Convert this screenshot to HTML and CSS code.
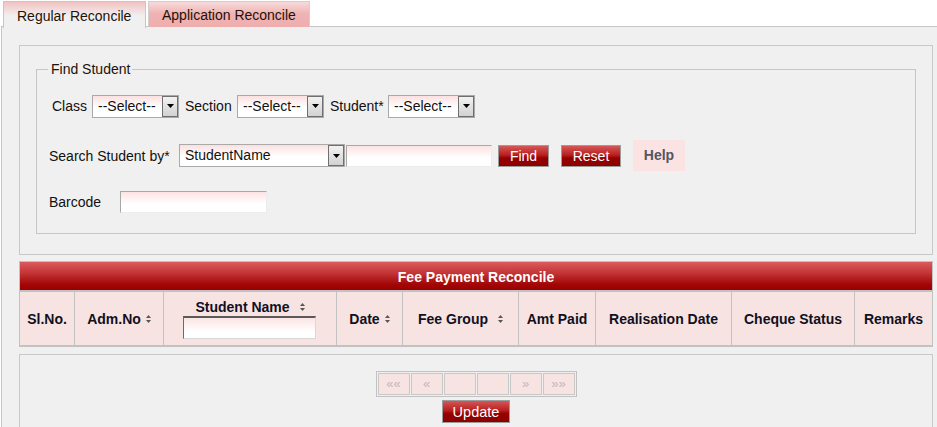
FILE: index.html
```html
<!DOCTYPE html>
<html>
<head>
<meta charset="utf-8">
<title>Fee Payment Reconcile</title>
<link rel="stylesheet" href="styles.css">
</head>
<body>
<div class="tabs">
  <div class="tab tab-active">Regular Reconcile</div>
  <div class="tab">Application Reconcile</div>
</div>
<div class="panel">
  <div class="box">
    <fieldset class="find">
      <legend>Find Student</legend>
      <div class="row row1">
        <span class="lbl lbl-class">Class</span>
        <div class="sel sel-sm"><span class="sel-text">--Select--</span><span class="sel-btn"><svg width="7" height="4" viewBox="0 0 7 4"><polygon points="0,0 7,0 3.5,4" fill="#000"/></svg></span></div>
        <span class="lbl lbl-section">Section</span>
        <div class="sel sel-sm"><span class="sel-text">--Select--</span><span class="sel-btn"><svg width="7" height="4" viewBox="0 0 7 4"><polygon points="0,0 7,0 3.5,4" fill="#000"/></svg></span></div>
        <span class="lbl lbl-student">Student*</span>
        <div class="sel sel-sm"><span class="sel-text">--Select--</span><span class="sel-btn"><svg width="7" height="4" viewBox="0 0 7 4"><polygon points="0,0 7,0 3.5,4" fill="#000"/></svg></span></div>
      </div>
      <div class="row row2">
        <span class="lbl lbl-search">Search Student by*</span>
        <div class="sel sel-lg"><span class="sel-text">StudentName</span><span class="sel-btn"><svg width="7" height="4" viewBox="0 0 7 4"><polygon points="0,0 7,0 3.5,4" fill="#000"/></svg></span></div>
        <input class="txt txt-search" type="text">
        <button class="btn btn-find">Find</button>
        <button class="btn btn-reset">Reset</button>
        <span class="help">Help</span>
      </div>
      <div class="row row3">
        <span class="lbl lbl-barcode">Barcode</span>
        <input class="txt txt-barcode" type="text">
      </div>
    </fieldset>
  </div>

  <div class="grid">
    <div class="caption">Fee Payment Reconcile</div>
    <div class="hrow">
      <div class="th">Sl.No.</div>
      <div class="th">Adm.No<svg class="sort" width="5" height="8" viewBox="0 0 5 8"><polygon points="0,3 2.5,0 5,3" fill="#555"/><polygon points="0,5 2.5,8 5,5" fill="#555"/></svg></div>
      <div class="th th-name">
        <div class="th-name-title">Student Name<svg class="sort sort-wide" width="5" height="8" viewBox="0 0 5 8"><polygon points="0,3 2.5,0 5,3" fill="#555"/><polygon points="0,5 2.5,8 5,5" fill="#555"/></svg></div>
        <input class="txt-filter" type="text">
      </div>
      <div class="th">Date<svg class="sort" width="5" height="8" viewBox="0 0 5 8"><polygon points="0,3 2.5,0 5,3" fill="#555"/><polygon points="0,5 2.5,8 5,5" fill="#555"/></svg></div>
      <div class="th">Fee Group<svg class="sort sort-wide" width="5" height="8" viewBox="0 0 5 8"><polygon points="0,3 2.5,0 5,3" fill="#555"/><polygon points="0,5 2.5,8 5,5" fill="#555"/></svg></div>
      <div class="th">Amt Paid</div>
      <div class="th">Realisation Date</div>
      <div class="th">Cheque Status</div>
      <div class="th">Remarks</div>
    </div>
  </div>

  <div class="footbox">
    <div class="pager">
      <span class="pg">&laquo;&laquo;</span>
      <span class="pg">&laquo;</span>
      <span class="pg"></span>
      <span class="pg"></span>
      <span class="pg">&raquo;</span>
      <span class="pg">&raquo;&raquo;</span>
    </div>
    <button class="btn btn-update">Update</button>
  </div>
</div>
</body>
</html>
```

FILE: styles.css
```css
html, body {
  margin: 0;
  padding: 0;
  overflow: hidden;
  background: #ffffff;
}

body {
  font-family: "Liberation Sans", Arial, sans-serif;
  font-size: 14px;
  color: #111;
}

/* tabs */
.tabs {
  display: flex;
  gap: 2px;
  padding: 1px 0 0 3px;
  height: 26px;
  margin-bottom: -1px;
  position: relative;
  z-index: 2;
}

.tab {
  box-sizing: border-box;
  height: 27px;
  padding: 0 13px;
  line-height: 28px;
  border: 1px solid #cfcfcf;
  border-bottom: none;
  background: linear-gradient(#f8dada 0, #efb2b2 12px, #eeaeae 100%);
  color: #1f1208;
  white-space: nowrap;
}

.tab-active {
  width: 143px;
  background: linear-gradient(#f2c2c2 0, #f0f0f0 14px, #f0f0f0 100%);
  border-color: #c6c6c6;
}

.tab:not(.tab-active) {
  width: 162px;
  height: 26px;
  line-height: 27px;
}

/* panel */
.panel {
  margin-left: 1px;
  margin-right: -20px;
  border: 1px solid #c6c6c6;
  background: #f0f0f0;
  padding: 18px 0 40px 17px;
}

.box {
  box-sizing: border-box;
  width: 914px;
  border: 1px solid #c8c8c8;
  padding: 15px 16px 20px 16px;
}

.find {
  margin: 0;
  min-width: 0;
  border: 1px solid #c6c6c6;
  padding: 0 12px 20px 12px;
}

.find legend {
  padding: 0 2px 0 3px;
  margin-left: -1px;
  line-height: 16px;
  color: #1f1208;
}

.row {
  display: flex;
  align-items: center;
}

.row1 {
  margin-top: 18px;
  height: 22px;
  padding-left: 3px;
}

.row2 {
  margin-top: 23px;
  height: 31px;
}

.row3 {
  margin-top: 20px;
  height: 22px;
}

.lbl {
  display: inline-block;
  white-space: nowrap;
  color: #111;
}

.lbl-class { width: 40px; }
.lbl-section { width: 52px; margin-left: 6px; }
.lbl-student { width: 58px; margin-left: 6px; }
.lbl-search { width: 130px; }
.lbl-barcode { width: 71px; }

/* select lookalike */
.sel {
  box-sizing: border-box;
  display: flex;
  height: 23px;
  border: 1px solid #a9a9a9;
  background: linear-gradient(#fbe0e0 0, #fff 55%, #fff 100%);
}

.sel-sm { width: 87px; }
.sel-lg { width: 166px; }

.sel-text {
  flex: 1;
  padding-left: 5px;
  line-height: 21px;
  color: #111;
  white-space: nowrap;
  overflow: hidden;
}

.sel-btn {
  box-sizing: border-box;
  width: 16px;
  height: 21px;
  border: 1px solid #6f6f6f;
  background: linear-gradient(#f2f2f2, #d2d2d2);
  display: flex;
  align-items: center;
  justify-content: center;
}

/* text inputs */
.txt {
  box-sizing: border-box;
  height: 22px;
  margin: 0;
  padding: 0 4px;
  border: 1px solid;
  border-color: #a8a8a8 #ececec #ececec #a8a8a8;
  background: linear-gradient(#fce3e3 0, #fff 60%);
  font: inherit;
}

.txt-search {
  width: 146px;
  margin-left: 1px;
}

.txt-barcode {
  width: 147px;
}

/* buttons */
.btn {
  box-sizing: border-box;
  height: 22px;
  margin: 0;
  padding: 0;
  border: 1px solid #9c9c9c;
  background: linear-gradient(#d75656 0, #b82020 45%, #960000 60%, #8c0000 100%);
  color: #fff;
  font: inherit;
  line-height: 20px;
  text-align: center;
}

.btn-find {
  width: 51px;
  margin-left: 6px;
}

.btn-reset {
  width: 60px;
  margin-left: 12px;
}

.help {
  box-sizing: border-box;
  width: 52px;
  height: 31px;
  margin-left: 12px;
  background: #fbe3e3;
  color: #555560;
  font-weight: bold;
  line-height: 31px;
  text-align: center;
}

/* header grid */
.grid {
  box-sizing: border-box;
  width: 914px;
  margin-top: 6px;
  border: 1px solid #c2c2c2;
  border-bottom-width: 2px;
}

.caption {
  height: 28px;
  line-height: 30px;
  text-align: center;
  color: #fff;
  font-weight: bold;
  background: linear-gradient(#dc5a5e 0, #c33436 40%, #a30606 80%, #990000 100%);
}

.hrow {
  display: grid;
  grid-template-columns: 54px 89px 173px 66px 116px 77px 136px 123px 78px;
  height: 53px;
  border-top: 2px solid #c2c2c2;
  background: #f8e3e3;
}

.th {
  box-sizing: border-box;
  border-left: 1px solid #c2c2c2;
  display: flex;
  align-items: center;
  justify-content: center;
  padding-top: 1px;
  font-weight: bold;
  color: #101020;
  white-space: nowrap;
}

.th:first-child {
  border-left: none;
}

.th-name {
  flex-direction: column;
  justify-content: flex-start;
  padding-top: 7px;
}

.th-name-title {
  line-height: 16px;
  display: flex;
  align-items: center;
}

.sort {
  margin-left: 5px;
}

.sort-wide {
  margin-left: 10px;
}

.txt-filter {
  box-sizing: border-box;
  width: 133px;
  height: 23px;
  margin: 1px 0 0 -1px;
  padding: 0;
  border: 1px solid;
  border-color: #5a5a5a #d8d8d8 #d8d8d8 #6a6a6a;
  border-top-width: 2px;
  background: linear-gradient(#fce4e4 0, #fff 70%);
}

/* footer box */
.footbox {
  box-sizing: border-box;
  width: 914px;
  height: 120px;
  margin-top: 7px;
  border: 1px solid #c8c8c8;
  padding-top: 16px;
  display: flex;
  flex-direction: column;
  align-items: center;
}

.pager {
  display: flex;
  gap: 1px;
  padding: 1px;
  border: 1px solid #c2c2c2;
}

.pg {
  box-sizing: border-box;
  width: 32px;
  height: 22px;
  border: 1px solid #c8c8c8;
  background: #f8e3e3;
  color: #c4b6b6;
  font-size: 13px;
  line-height: 20px;
  text-align: center;
}

.btn-update {
  width: 68px;
  height: 23px;
  margin-top: 3px;
  font-size: 14.5px;
}
```
